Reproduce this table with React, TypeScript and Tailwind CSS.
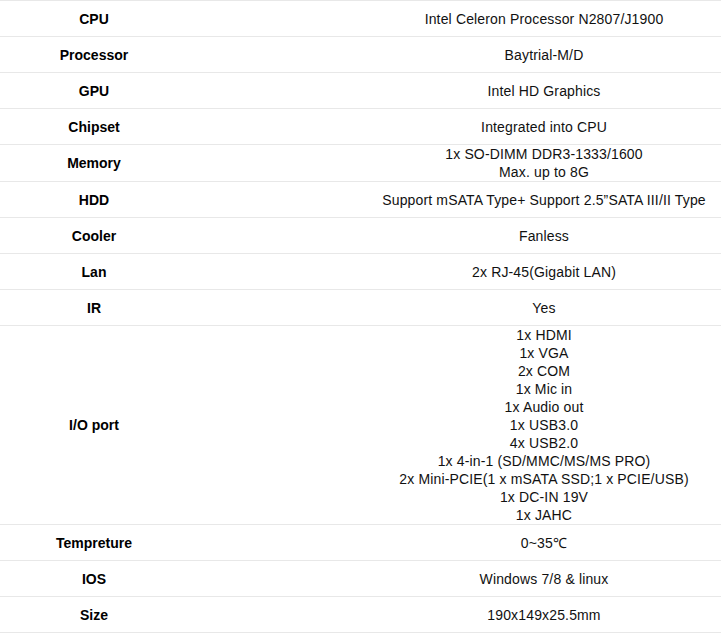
const specs: { label: string; value: string[] }[] = [
  { label: "CPU", value: ["Intel Celeron Processor N2807/J1900"] },
  { label: "Processor", value: ["Baytrial-M/D"] },
  { label: "GPU", value: ["Intel HD Graphics"] },
  { label: "Chipset", value: ["Integrated into CPU"] },
  { label: "Memory", value: ["1x SO-DIMM DDR3-1333/1600", "Max. up to 8G"] },
  { label: "HDD", value: ["Support mSATA Type+ Support 2.5\u201dSATA III/II Type"] },
  { label: "Cooler", value: ["Fanless"] },
  { label: "Lan", value: ["2x RJ-45(Gigabit LAN)"] },
  { label: "IR", value: ["Yes"] },
  {
    label: "I/O port",
    value: [
      "1x HDMI",
      "1x VGA",
      "2x COM",
      "1x Mic in",
      "1x Audio out",
      "1x USB3.0",
      "4x USB2.0",
      "1x 4-in-1 (SD/MMC/MS/MS PRO)",
      "2x Mini-PCIE(1 x mSATA SSD;1 x PCIE/USB)",
      "1x DC-IN 19V",
      "1x JAHC",
    ],
  },
  { label: "Tempreture", value: ["0~35\u2103"] },
  { label: "IOS", value: ["Windows 7/8 & linux"] },
  { label: "Size", value: ["190x149x25.5mm"] },
];

export default function App() {
  return (
    <div className="h-[633px] w-[721px] overflow-hidden bg-white font-['Liberation_Sans',Arial,sans-serif] text-[14px] leading-[18px] text-[#111]">
      <table className="w-[900px] table-fixed border-collapse border-t border-[#e8e8e8]">
        <colgroup>
          <col className="w-[188px]" />
          <col />
        </colgroup>
        <tbody>
          {specs.map((row) => (
            <tr key={row.label} className="border-b border-[#e8e8e8]">
              <td className="h-[36px] p-0 text-center align-middle font-bold text-black">{row.label}</td>
              <td className="h-[36px] p-0 text-center align-middle tracking-[0.15px]">
                {row.value.map((line) => (
                  <div key={line}>{line}</div>
                ))}
              </td>
            </tr>
          ))}
        </tbody>
      </table>
    </div>
  );
}
